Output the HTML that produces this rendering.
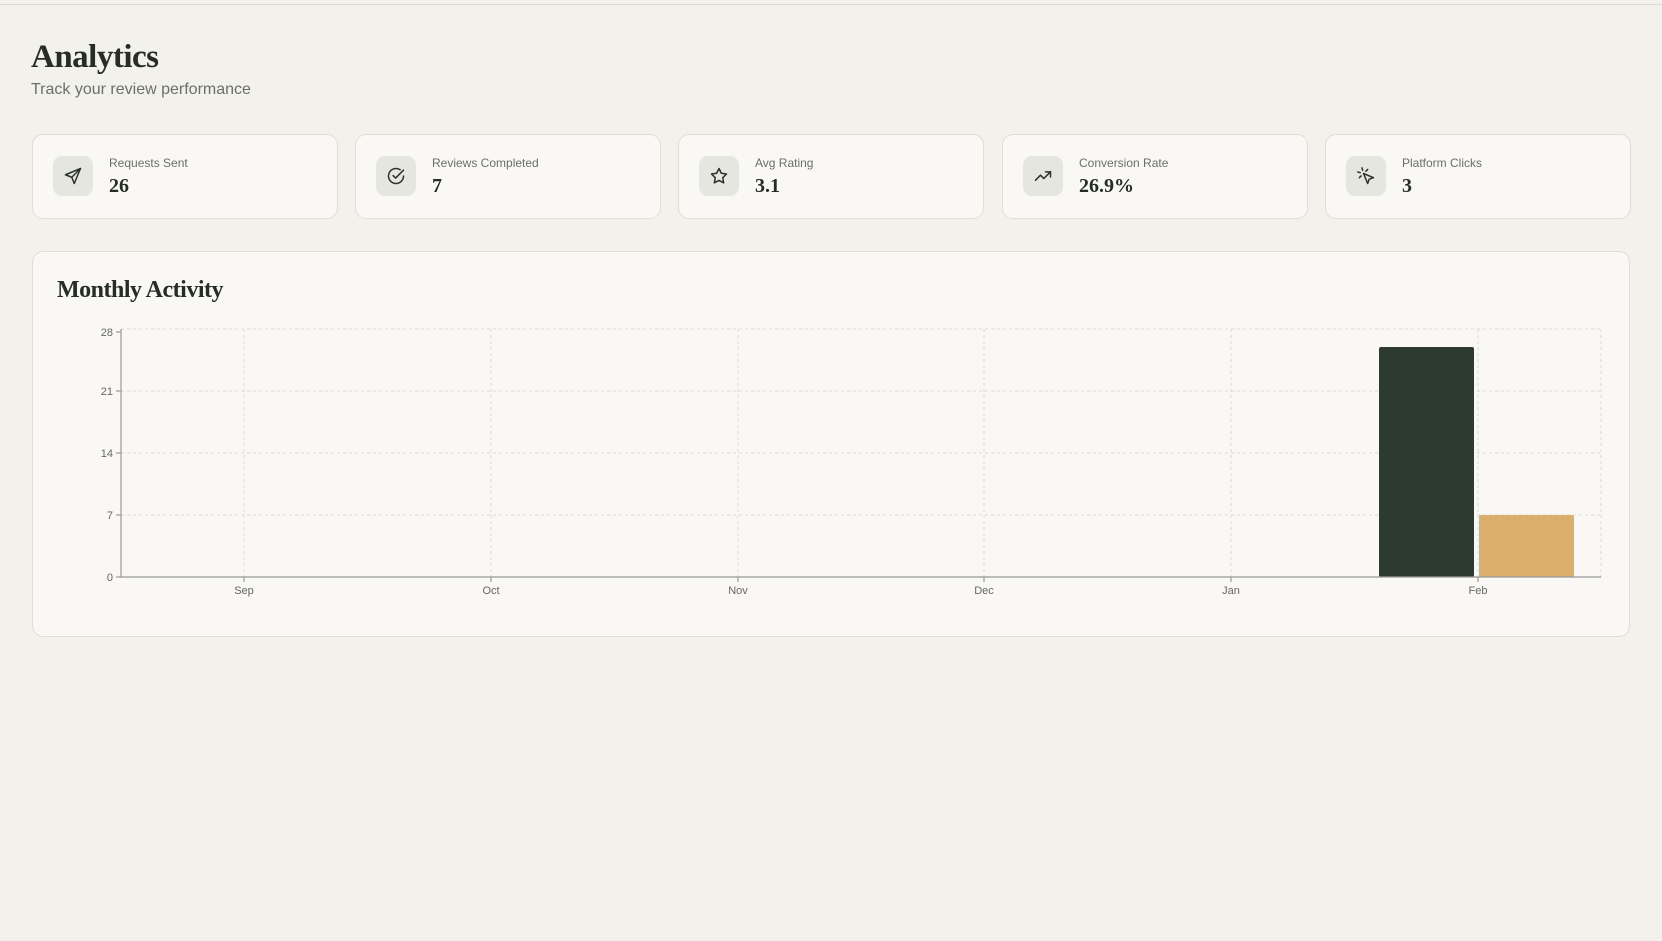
<!DOCTYPE html>
<html><head><meta charset="utf-8"><style>
*{margin:0;padding:0;box-sizing:border-box}
body{width:1662px;height:941px;background:#f3f1eb;font-family:"Liberation Sans",sans-serif;position:relative;overflow:hidden;color:#2b3329}
.topline{position:absolute;left:0;top:4px;width:1662px;height:1px;background:#dedbd4}
h1{position:absolute;left:31px;top:39px;font-family:"Liberation Serif",serif;font-weight:bold;font-size:33px;letter-spacing:-0.5px;color:#252d24}
.sub{position:absolute;left:31px;top:81px;font-size:16px;color:#6b6f68}
.card{position:absolute;top:134px;width:306px;height:85px;background:#f9f8f5;border:1px solid #e0ddd6;border-radius:11px}
.ic{position:absolute;left:20px;top:21px;width:40px;height:40px;background:#e6e6e1;border-radius:9px;display:flex;align-items:center;justify-content:center}
.lab{position:absolute;left:76px;top:21px;font-size:12px;color:#6a6e67}
.val{position:absolute;left:76px;top:40px;font-family:"Liberation Serif",serif;font-weight:bold;font-size:20px;color:#252d24}
.chart{position:absolute;left:32px;top:251px;width:1598px;height:386px;background:#f9f8f5;border:1px solid #e0ddd6;border-radius:11px}
.ct{position:absolute;left:24px;top:25px;font-family:"Liberation Serif",serif;font-weight:bold;font-size:24px;letter-spacing:-0.5px;color:#252d24}
svg.plot{position:absolute;left:0;top:0}
</style></head><body>
<div class="topline"></div>
<h1>Analytics</h1>
<div class="sub">Track your review performance</div>

<div class="card" style="left:32px"><div class="ic"><svg width="20" height="20" viewBox="0 0 24 24" fill="none" stroke="#2b3329" stroke-width="1.8" stroke-linejoin="round" stroke-linecap="round"><path d="M21 3L3 10.5l7.5 3L13.5 21z"/><path d="M21 3L10.5 13.5"/></svg></div><div class="lab">Requests Sent</div><div class="val">26</div></div>
<div class="card" style="left:355px"><div class="ic"><svg width="20" height="20" viewBox="0 0 24 24" fill="none" stroke="#2b3329" stroke-width="1.8" stroke-linecap="round" stroke-linejoin="round"><path d="M21 12a9 9 0 1 1-4-7.5"/><path d="M8.5 11.5l3 3L21 5"/></svg></div><div class="lab">Reviews Completed</div><div class="val">7</div></div>
<div class="card" style="left:678px"><div class="ic"><svg width="20" height="20" viewBox="0 0 24 24" fill="none" stroke="#2b3329" stroke-width="1.8" stroke-linejoin="round"><path d="M12 3l2.8 5.7 6.2.9-4.5 4.4 1.1 6.2L12 17.3 6.4 20.2l1.1-6.2L3 9.6l6.2-.9z"/></svg></div><div class="lab">Avg Rating</div><div class="val">3.1</div></div>
<div class="card" style="left:1002px"><div class="ic"><svg width="20" height="20" viewBox="0 0 24 24" fill="none" stroke="#2b3329" stroke-width="1.8" stroke-linecap="round" stroke-linejoin="round"><path d="M3 17l6-6 4 4 8-8"/><path d="M15 7h6v6"/></svg></div><div class="lab">Conversion Rate</div><div class="val">26.9%</div></div>
<div class="card" style="left:1325px"><div class="ic"><svg width="20" height="20" viewBox="0 0 24 24" fill="none" stroke="#2b3329" stroke-width="1.8" stroke-linecap="round" stroke-linejoin="round"><path d="M9 9l5 12 1.8-5.2L21 14z"/><path d="M7.2 2.2l.8 2.9M5.1 8l-2.9-.8M14 4.1l-2.1 2.1M6.1 11.9L4 14"/></svg></div><div class="lab">Platform Clicks</div><div class="val">3</div></div>

<div class="chart"><div class="ct">Monthly Activity</div></div>

<svg class="plot" width="1662" height="941" font-family="Liberation Sans, sans-serif" font-size="11" fill="#666">
<g stroke="#dcdad4" stroke-dasharray="3 3" stroke-width="1">
<line x1="121" y1="329" x2="1601" y2="329"/>
<line x1="121" y1="391" x2="1601" y2="391"/>
<line x1="121" y1="453" x2="1601" y2="453"/>
<line x1="121" y1="515" x2="1601" y2="515"/>
<line x1="244" y1="329" x2="244" y2="577"/>
<line x1="491" y1="329" x2="491" y2="577"/>
<line x1="738" y1="329" x2="738" y2="577"/>
<line x1="984" y1="329" x2="984" y2="577"/>
<line x1="1231" y1="329" x2="1231" y2="577"/>
<line x1="1478" y1="329" x2="1478" y2="577"/>
<line x1="1601" y1="329" x2="1601" y2="577"/>
</g>
<rect x="1379" y="347" width="95" height="230" rx="2" fill="#2d3a2e"/>
<rect x="1479" y="515" width="95" height="62" rx="2" fill="#dbae6e"/>
<g stroke="#999" stroke-width="1.2">
<line x1="121" y1="329" x2="121" y2="577"/>
<line x1="121" y1="577" x2="1601" y2="577"/>
<line x1="116" y1="332" x2="121" y2="332"/>
<line x1="116" y1="391" x2="121" y2="391"/>
<line x1="116" y1="453" x2="121" y2="453"/>
<line x1="116" y1="515" x2="121" y2="515"/>
<line x1="116" y1="577" x2="121" y2="577"/>
<line x1="244" y1="577" x2="244" y2="582"/>
<line x1="491" y1="577" x2="491" y2="582"/>
<line x1="738" y1="577" x2="738" y2="582"/>
<line x1="984" y1="577" x2="984" y2="582"/>
<line x1="1231" y1="577" x2="1231" y2="582"/>
<line x1="1478" y1="577" x2="1478" y2="582"/>
</g>
<g text-anchor="end">
<text x="113" y="336">28</text><text x="113" y="395">21</text><text x="113" y="457">14</text><text x="113" y="519">7</text><text x="113" y="581">0</text>
</g>
<g text-anchor="middle">
<text x="244" y="594">Sep</text><text x="491" y="594">Oct</text><text x="738" y="594">Nov</text><text x="984" y="594">Dec</text><text x="1231" y="594">Jan</text><text x="1478" y="594">Feb</text>
</g>
</svg>
</body></html>
